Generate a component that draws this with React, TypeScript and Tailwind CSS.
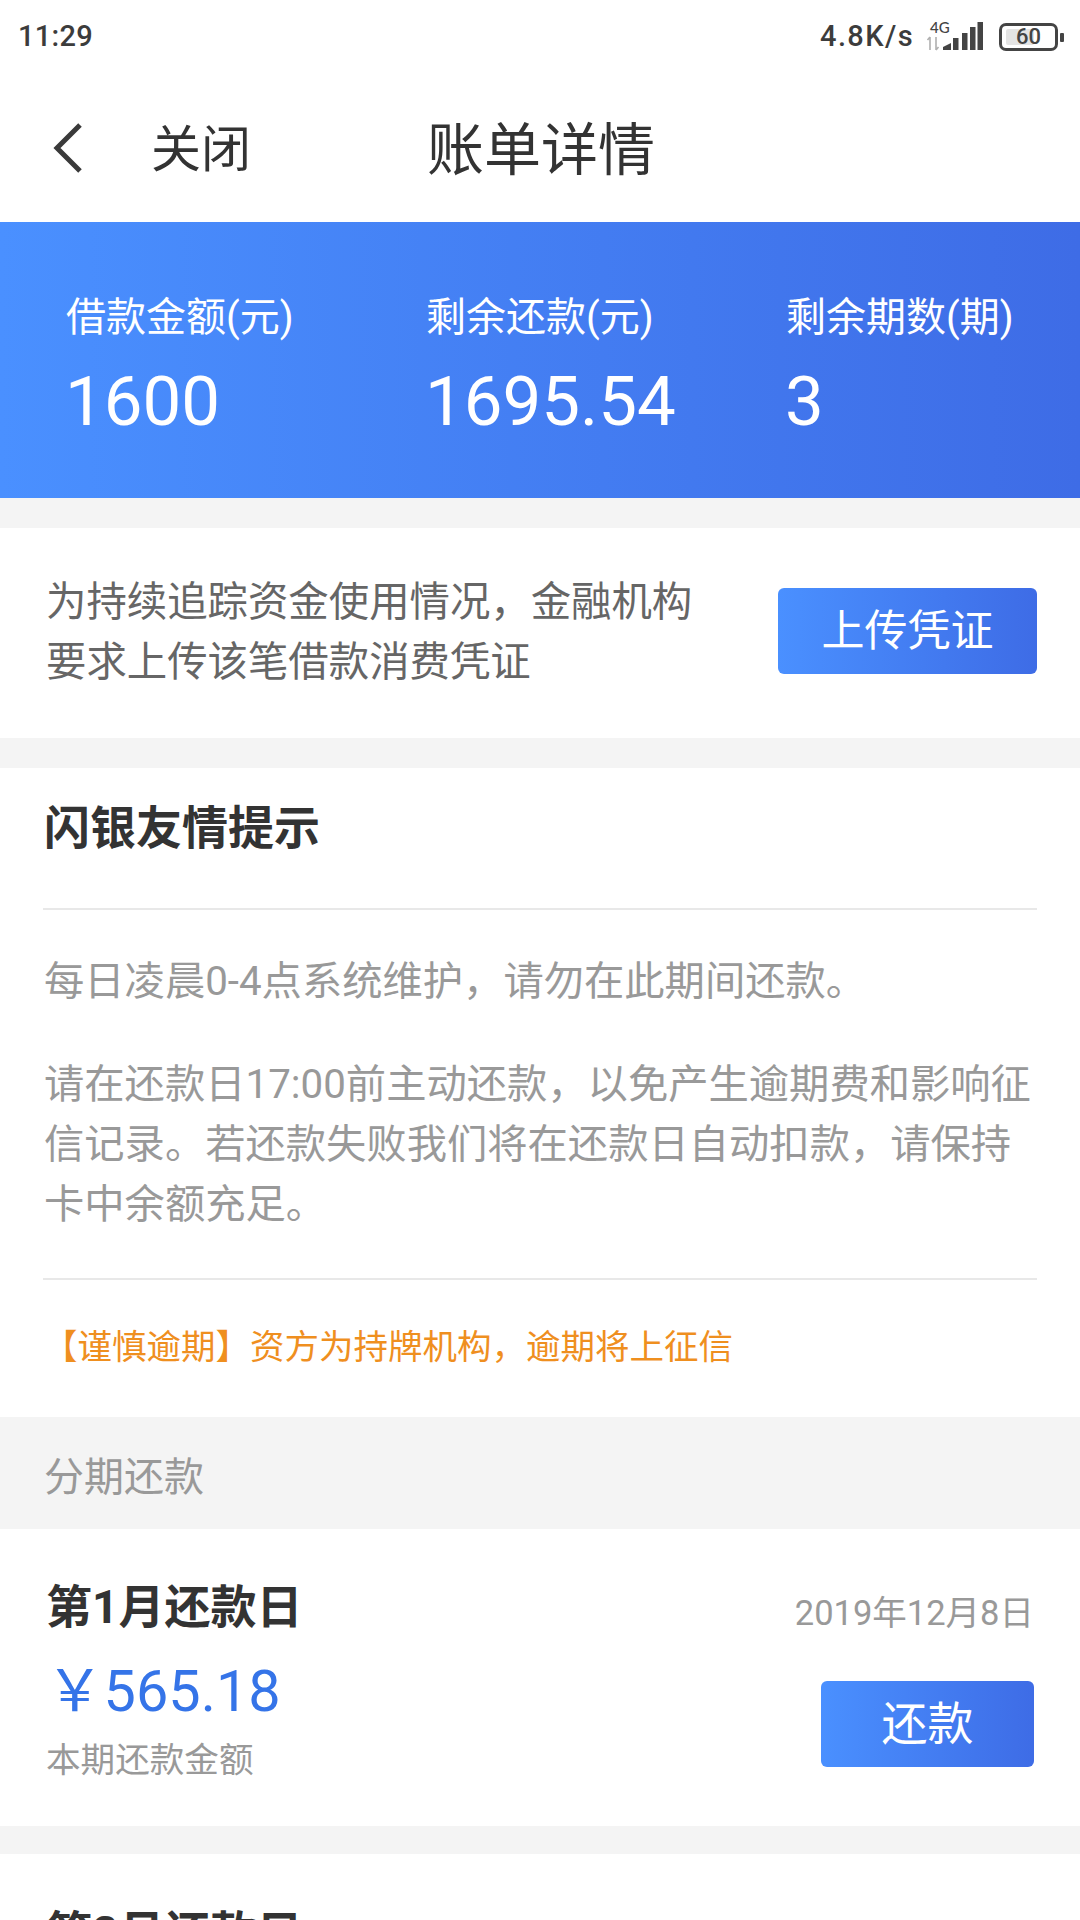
const font = { fontFamily: '"Roboto", "Noto Sans CJK SC", sans-serif' };

function Signal() {
  return (
    <svg width="60" height="34" viewBox="0 0 60 34" className="block">
      <text x="5" y="13" fontSize="15" fontWeight="500" fill="#444" fontFamily="Lato">4G</text>
      <path d="M5 17v13M2.5 20l2.5-3M11 30v-13M11 30l2.5-3" stroke="#b0b0b0" strokeWidth="1.6" fill="none" />
      <path d="M18 30v-3l8-4v7z" fill="#444" />
      <rect x="28" y="18" width="5.5" height="12" fill="#444" />
      <rect x="37" y="13" width="5.5" height="17" fill="#444" />
      <rect x="45" y="7" width="5.5" height="23" fill="#444" />
      <rect x="52.5" y="2" width="5.5" height="28" fill="#444" />
    </svg>
  );
}

function Battery() {
  return (
    <div className="flex items-center">
      <div className="relative flex h-[28px] w-[59px] items-center justify-center rounded-[7px] border-[3px] border-[#444]">
        <div className="absolute left-[4px] top-[3px] h-[16px] w-[28px] rounded-[2px] bg-[#e4e4e4]" />
        <span className="relative text-[22px] font-medium leading-none text-[#444]">60</span>
      </div>
      <div className="ml-[2px] h-[9px] w-[4px] rounded-[1px] bg-[#444]" />
    </div>
  );
}

function Stat({ label, value }: { label: string; value: string }) {
  return (
    <div>
      <div className="text-[40px] leading-[50px]">{label}</div>
      <div className="mt-[19px] -ml-[1px] text-[69px] leading-[80px]">{value}</div>
    </div>
  );
}

function Gap({ h }: { h: string }) {
  return <div className={`${h} bg-[#f4f4f4]`} />;
}

export default function App() {
  return (
    <div style={font} className="h-[1920px] w-[1080px] overflow-hidden bg-white">
      <div className="flex h-[72px] items-center justify-between pl-[18px] pr-[16px] pt-[2px] text-[#3c3c3c]">
        <span className="text-[29px] font-medium tracking-[0.3px]">11:29</span>
        <div className="flex items-center">
          <span className="text-[29px] font-medium tracking-[1.4px]">4.8K/s</span>
          <div className="ml-[11px]"><Signal /></div>
          <div className="ml-[14px]"><Battery /></div>
        </div>
      </div>

      <div className="flex h-[150px] items-center pt-[6px] text-[#333]">
        <svg width="34" height="52" viewBox="0 0 34 52" className="ml-[52px] mt-[-4px]">
          <path d="M28 3 L5 26 L28 49" stroke="#3a3a3a" strokeWidth="5" fill="none" />
        </svg>
        <span className="ml-[65px] text-[50px] leading-none">关闭</span>
        <span className="ml-[176px] text-[57px] leading-none">账单详情</span>
      </div>

      <div className="grid h-[276px] grid-cols-[360px_360px_1fr] bg-gradient-to-r from-[#4a90ff] to-[#3e6ce6] pl-[66px] pt-[71px] text-white">
        <Stat label="借款金额(元)" value="1600" />
        <Stat label="剩余还款(元)" value="1695.54" />
        <Stat label="剩余期数(期)" value="3" />
      </div>

      <Gap h="h-[30px]" />

      <div className="flex h-[210px] items-center justify-between pl-[46px] pr-[43px]">
        <p className="text-[40.4px] leading-[60px] text-[#666]">
          为持续追踪资金使用情况，金融机构
          <br />
          要求上传该笔借款消费凭证
        </p>
        <div className="mt-[-4px] flex h-[86px] w-[259px] items-center justify-center rounded-[6px] bg-gradient-to-r from-[#4a90ff] to-[#3e6ce6] text-[43px] text-white">
          上传凭证
        </div>
      </div>

      <Gap h="h-[30px]" />

      <div className="h-[649px] px-[43px]">
        <div className="flex h-[142px] items-start border-b-2 border-[#e8e8e8] pl-[1px] pt-[28px] text-[46px] font-bold leading-[64px] text-[#333]">
          闪银友情提示
        </div>
        <div className="h-[370px] border-b-2 border-[#e8e8e8] pl-[1px] pt-[42px] text-[40.3px] leading-[60px] text-[#999]">
          <p>每日凌晨0-4点系统维护，请勿在此期间还款。</p>
          <p className="mt-[43px]">
            请在还款日17:00前主动还款，以免产生逾期费和影响征
            <br />
            信记录。若还款失败我们将在还款日自动扣款，请保持
            <br />
            卡中余额充足。
          </p>
        </div>
        <p className="pt-[42px] text-[34.5px] leading-[50px] text-[#ef8f1f]">【谨慎逾期】资方为持牌机构，逾期将上征信</p>
      </div>

      <div className="flex h-[112px] items-center bg-[#f4f4f4] pl-[44px] pt-[10px] text-[40px] text-[#999]">分期还款</div>

      <div className="flex h-[297px] justify-between pl-[46px] pr-[46px]">
        <div>
          <div className="pt-[46px] text-[46px] font-bold leading-[64px] text-[#333]">第1月还款日</div>
          <div className="mt-[20px] text-[57.6px] leading-[66px] text-[#3574e8]">￥565.18</div>
          <div className="mt-[11px] text-[34.6px] leading-[48px] text-[#999]">本期还款金额</div>
        </div>
        <div className="flex flex-col items-end">
          <div className="pt-[61px] text-[34.5px] leading-[46px] text-[#999]">2019年12月8日</div>
          <div className="mt-[45px] flex h-[86px] w-[213px] items-center justify-center rounded-[6px] bg-gradient-to-r from-[#4a90ff] to-[#3e6ce6] text-[46px] text-white">
            还款
          </div>
        </div>
      </div>

      <Gap h="h-[28px]" />

      <div className="pl-[46px] pt-[47px] text-[46px] font-bold leading-[64px] text-[#333]">第2月还款日</div>
    </div>
  );
}
